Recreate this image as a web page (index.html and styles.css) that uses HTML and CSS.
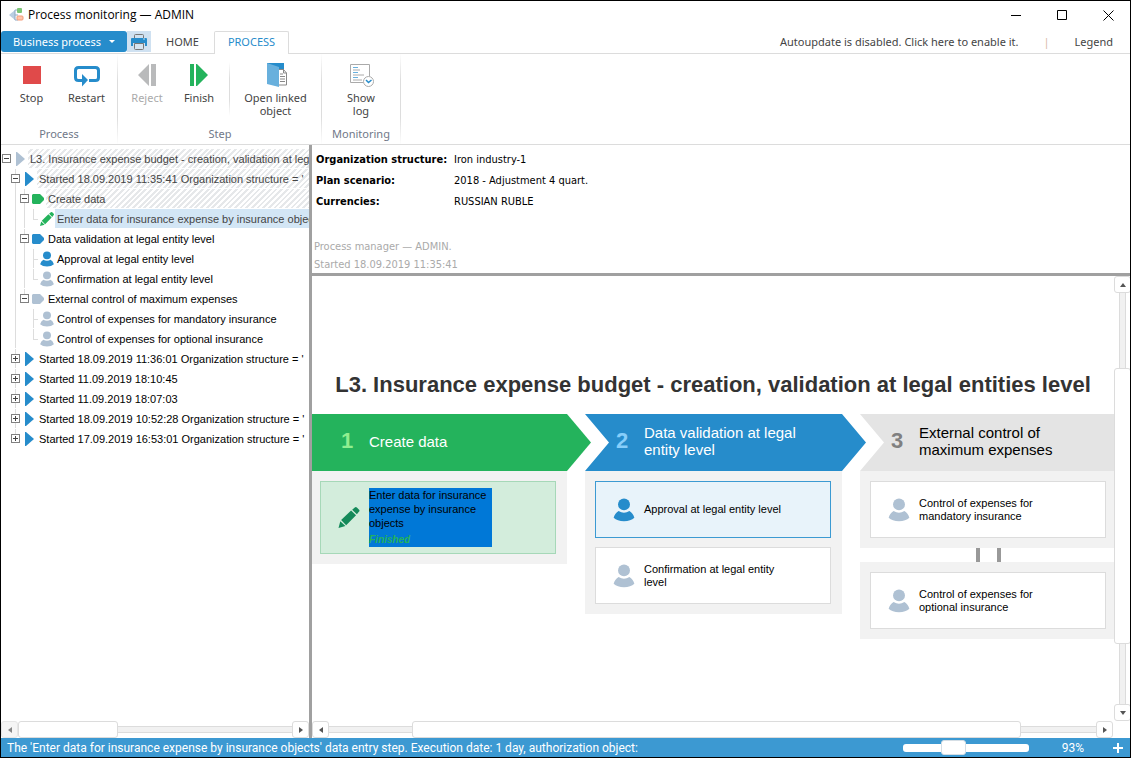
FILE: index.html
```html
<!DOCTYPE html>
<html lang="en">
<head>
  <meta charset="UTF-8">
  <meta name="viewport" content="width=device-width, initial-scale=1.0">
  <title>Process monitoring — ADMIN</title>
  <link rel="stylesheet" href="styles.css">
</head>
<body>
  <svg class="sprite" aria-hidden="true">
    <symbol id="play" viewBox="0 0 14 16"><path d="M3 1h1l8 7-8 7H3z" fill="currentColor"/></symbol>
    <symbol id="tag" viewBox="0 0 14 16"><path d="M2 3h7l4 4v2l-4 4H2l-1-1V4z" fill="currentColor"/></symbol>
    <symbol id="person" viewBox="0 0 14 16"><ellipse cx="7" cy="4.300" rx="4" ry="3.900" fill="currentColor"/><path d="M3.400 8.700Q7 10.800 10.600 8.700 13 10 13.900 13.200 11.500 15.500 7 15.500T.1 13.200Q1 10 3.400 8.700z" fill="currentColor"/></symbol>
    <symbol id="pencil" viewBox="0 0 20 20"><path d="M0 20l1.700-6.500 4.900 4.700zM2.500 12.500L12 3.300l4.700 4.600-9.400 9.500zM13 2.500L15.500.5q1-.9 2 0L19.600 2.600q.8.9 0 1.800L17.500 7z" fill="currentColor"/></symbol>
  </svg>

  <div class="window">
    <header class="titlebar">
      <svg class="app-icon" viewBox="0 0 16 16">
        <path d="M0 8l6-5v10z" fill="#b9cee2"/><path d="M6 3h3M6 8h3M6 13h3M6 3v10" stroke="#8ea9c4" fill="none"/>
        <rect x="8" y="1" width="5" height="5" rx="1" fill="#7cc576"/><rect x="8" y="9" width="6" height="4" rx="1" fill="#ffc6ad" stroke="#f59b78"/>
      </svg>
      <h1>Process monitoring — ADMIN</h1>
      <div class="window-buttons">
        <button aria-label="Minimize"><svg viewBox="0 0 11 11"><path d="M0 5.500h10"/></svg></button>
        <button aria-label="Maximize"><svg viewBox="0 0 11 11"><path d="M.5.5h9v9h-9z"/></svg></button>
        <button aria-label="Close"><svg viewBox="0 0 11 11"><path d="M.5.5l10 10M10.500.5l-10 10"/></svg></button>
      </div>
    </header>

    <nav class="tabs">
      <button class="menu-button">Business process <span class="caret"></span></button>
      <button class="print" aria-label="Print">
        <svg viewBox="0 0 16 16"><path d="M3.500 5V1.500q0-1 1-1h7q1 0 1 1V5" fill="none" stroke="#777"/><path d="M1 4h11v2h2V4h1q1 0 1 1v7h-2V9H2v3H0V5q0-1 1-1z" fill="#268ccb"/><path d="M12 4h2v2h-2z" fill="#6fb4de"/><path d="M3.500 9.500h9v5q0 1-1 1h-7q-1 0-1-1z" fill="#d5e4f1" stroke="#777"/></svg>
      </button>
      <a class="tab" href="#home">HOME</a>
      <a class="tab active" href="#process">PROCESS</a>
      <div class="tab-links">
        <a href="#autoupdate">Autoupdate is disabled. Click here to enable it.</a>
        <span class="bar">|</span>
        <a href="#legend">Legend</a>
      </div>
    </nav>

    <section class="ribbon">
      <div class="group">
        <div class="tools">
          <button><svg viewBox="0 0 26 26"><path d="M4 4h18v18H4z" fill="#e04a4a"/></svg>Stop</button>
          <button><svg viewBox="0 0 26 26"><path d="M8 18.500H4.500q-3 0-3-3v-7q0-3 3-3h17q3 0 3 3v7q0 3-3 3H15" fill="none" stroke="#268ccb" stroke-width="3"/><path d="M8 12l6 6-6 6.500z" fill="#268ccb"/></svg>Restart</button>
        </div>
        <div class="caption">Process</div>
      </div>
      <div class="group step">
        <div class="tools">
          <button disabled><svg viewBox="0 0 26 26"><path d="M4 13L15 2v22zM17 2h5v22h-5z" fill="#b9babb"/></svg>Reject</button>
          <button><svg viewBox="0 0 26 26"><path d="M4 2h4v22H4zM10 2h1l11 11-11 11h-1z" fill="#24b35c"/></svg>Finish</button>
          <span class="divider"></span>
          <button class="wide"><svg viewBox="0 0 26 26"><path d="M4 1h17v20H4z" fill="#268ccb"/><path d="M15.500 7.500h5l3 3.500v12h-8z" fill="#fff" stroke="#888"/><path d="M20.500 7v4h3M17 12h3M17 14.500h5M17 17h5M17 19.500h5" fill="none" stroke="#888"/><path d="M4 1l12 4v20L4 22z" fill="#68b0dd"/></svg>Open linked<br>object</button>
        </div>
        <div class="caption">Step</div>
      </div>
      <div class="group">
        <div class="tools">
          <button class="log"><svg viewBox="0 0 26 26"><path d="M15 20.500H2.500v-18h19V14" fill="none" stroke="#aaa"/><path d="M5 8h7M5 13h11M5 18h9" stroke="#aaa"/><path d="M5 5.500h5M5 10.500h5M5 15.500h5" stroke="#68b0dd"/><circle cx="20.500" cy="19.500" r="5" fill="#fff" stroke="#aaa"/><path d="M18 18l2.500 2.500L23.500 18" fill="none" stroke="#268ccb" stroke-width="1.500"/></svg>Show<br>log</button>
        </div>
        <div class="caption">Monitoring</div>
      </div>
    </section>

    <main class="workspace">
      <aside class="sidebar">
        <ul class="tree">
          <li>
            <div class="row hatched"><button class="toggle" aria-label="Collapse"></button><svg class="muted"><use href="#play"/></svg><span>L3. Insurance expense budget - creation, validation at leg</span></div>
            <ul>
              <li>
                <div class="row hatched"><button class="toggle" aria-label="Collapse"></button><svg class="blue"><use href="#play"/></svg><span>Started 18.09.2019 11:35:41 Organization structure = '</span></div>
                <ul>
                  <li>
                    <div class="row hatched"><button class="toggle" aria-label="Collapse"></button><svg class="green"><use href="#tag"/></svg><span>Create data</span></div>
                    <ul>
                      <li><div class="row selected"><svg class="green"><use href="#pencil"/></svg><span>Enter data for insurance expense by insurance objec</span></div></li>
                    </ul>
                  </li>
                  <li>
                    <div class="row"><button class="toggle" aria-label="Collapse"></button><svg class="blue"><use href="#tag"/></svg><span>Data validation at legal entity level</span></div>
                    <ul>
                      <li><div class="row"><svg class="blue"><use href="#person"/></svg><span>Approval at legal entity level</span></div></li>
                      <li><div class="row"><svg class="muted"><use href="#person"/></svg><span>Confirmation at legal entity level</span></div></li>
                    </ul>
                  </li>
                  <li>
                    <div class="row"><button class="toggle" aria-label="Collapse"></button><svg class="muted"><use href="#tag"/></svg><span>External control of maximum expenses</span></div>
                    <ul>
                      <li><div class="row"><svg class="muted"><use href="#person"/></svg><span>Control of expenses for mandatory insurance</span></div></li>
                      <li><div class="row"><svg class="muted"><use href="#person"/></svg><span>Control of expenses for optional insurance</span></div></li>
                    </ul>
                  </li>
                </ul>
              </li>
              <li><div class="row"><button class="toggle closed" aria-label="Expand"></button><svg class="blue"><use href="#play"/></svg><span>Started 18.09.2019 11:36:01 Organization structure = '</span></div></li>
              <li><div class="row"><button class="toggle closed" aria-label="Expand"></button><svg class="blue"><use href="#play"/></svg><span>Started 11.09.2019 18:10:45</span></div></li>
              <li><div class="row"><button class="toggle closed" aria-label="Expand"></button><svg class="blue"><use href="#play"/></svg><span>Started 11.09.2019 18:07:03</span></div></li>
              <li><div class="row"><button class="toggle closed" aria-label="Expand"></button><svg class="blue"><use href="#play"/></svg><span>Started 18.09.2019 10:52:28 Organization structure = '</span></div></li>
              <li><div class="row"><button class="toggle closed" aria-label="Expand"></button><svg class="blue"><use href="#play"/></svg><span>Started 17.09.2019 16:53:01 Organization structure = '</span></div></li>
            </ul>
          </li>
        </ul>
        <div class="scroll">
          <button class="off" aria-label="Scroll left"><i class="left"></i></button>
          <div class="thumb side-thumb"></div>
          <div class="track"></div>
          <button aria-label="Scroll right"><i class="right"></i></button>
        </div>
      </aside>

      <section class="content">
        <div class="info">
          <dl>
            <dt>Organization structure:</dt><dd>Iron industry-1</dd>
            <dt>Plan scenario:</dt><dd>2018 - Adjustment 4 quart.</dd>
            <dt>Currencies:</dt><dd>RUSSIAN RUBLE</dd>
          </dl>
          <p>Process manager — ADMIN.<br>Started 18.09.2019 11:35:41</p>
        </div>

        <div class="diagram-area">
          <div class="diagram">
            <h2>L3. Insurance expense budget - creation, validation at legal entities level</h2>
            <div class="stages">
              <div class="stage">
                <div class="arrow done first"><b>1</b><span>Create data</span></div>
                <div class="cards">
                  <div class="card finished">
                    <svg><use href="#pencil"/></svg>
                    <div class="marked">Enter data for insurance expense by insurance objects <em>Finished</em></div>
                  </div>
                </div>
              </div>
              <div class="stage">
                <div class="arrow current"><b>2</b><span>Data validation at legal entity level</span></div>
                <div class="cards">
                  <div class="card active"><svg class="blue"><use href="#person"/></svg><span>Approval at legal entity level</span></div>
                  <div class="card"><svg class="muted"><use href="#person"/></svg><span>Confirmation at legal entity level</span></div>
                </div>
              </div>
              <div class="stage">
                <div class="arrow"><b>3</b><span>External control of maximum expenses</span></div>
                <div class="cards">
                  <div class="card"><svg class="muted"><use href="#person"/></svg><span>Control of expenses for mandatory insurance</span></div>
                </div>
                <div class="link"></div>
                <div class="cards">
                  <div class="card"><svg class="muted"><use href="#person"/></svg><span>Control of expenses for optional insurance</span></div>
                </div>
              </div>
            </div>
          </div>
          <div class="scroll vertical">
            <button aria-label="Scroll up"><i class="up"></i></button>
            <div class="track short"></div>
            <div class="thumb tall-thumb"></div>
            <div class="track"></div>
            <button aria-label="Scroll down"><i class="down"></i></button>
          </div>
        </div>
        <div class="scroll main-scroll">
          <button aria-label="Scroll left"><i class="left"></i></button>
          <div class="track before"></div>
          <div class="thumb main-thumb"></div>
          <div class="track after"></div>
          <button aria-label="Scroll right"><i class="right"></i></button>
        </div>
      </section>
    </main>

    <footer class="status">
      <span class="message">The 'Enter data for insurance expense by insurance objects' data entry step. Execution date: 1 day, authorization object:</span>
      <input type="range" min="0" max="100" value="38" aria-label="Zoom">
      <output>93%</output>
      <button aria-label="Zoom in"><svg viewBox="0 0 10 10"><path d="M5 0v10M0 5h10" stroke="#fff" stroke-width="2"/></svg></button>
    </footer>
  </div>
</body>
</html>
```
FILE: styles.css
```css
* { box-sizing: border-box; }
body { margin: 0; font: 11px/13px "Noto Sans", sans-serif; color: #444; background: #fff; }
button { font: inherit; color: inherit; background: none; border: 0; padding: 0; }
a { color: inherit; text-decoration: none; }
ul { list-style: none; margin: 0; padding: 0; }
.sprite { display: none; }
.blue { color: #268ccb; }
.green { color: #24b35c; }
.muted { color: #afc1d3; }

.window { height: 100vh; border: 1px solid #000; display: flex; flex-direction: column; overflow: hidden; }

/* title bar */
.titlebar { height: 30px; flex: none; display: flex; align-items: center; padding: 0 16px 2px 8px; }
.app-icon { width: 16px; height: 16px; }
.titlebar h1 { margin: 0 0 0 3px; font: 12px/16px "Open Sans", sans-serif; color: #000; flex: 1; }
.window-buttons { display: flex; gap: 35px; }
.window-buttons svg { display: block; width: 11px; height: 11px; fill: none; stroke: #000; }

/* tabs */
.tabs { height: 23px; flex: none; display: flex; border-bottom: 1px solid #dcdcdc; }
.menu-button { width: 126px; height: 21px; background: #268ccb; color: #fff; border-radius: 3px; display: flex; align-items: center; justify-content: center; gap: 8px; }
.caret { border: 3px solid transparent; border-top-color: #fff; border-bottom: 0; }
.print { width: 24px; height: 21px; background: #cfe1f1; display: flex; align-items: center; justify-content: center; }
.print svg { width: 16px; height: 16px; }
.tab { width: 63px; line-height: 21px; text-align: center; font-size: 11px; }
.tab.active { width: 75px; height: 23px; border: 1px solid #dcdcdc; border-bottom: 0; border-radius: 2px 2px 0 0; background: #fff; color: #268ccb; line-height: 20px; }
.tab-links { margin-left: auto; padding-right: 17px; display: flex; line-height: 22px; }
.bar { width: 56px; text-align: center; color: #d9b8a8; }

/* ribbon */
.ribbon { height: 91px; flex: none; display: flex; border-bottom: 1px solid #dcdcdc; }
.group { display: flex; flex-direction: column; border-right: 1px solid; border-image: linear-gradient(#fff, #ddd 30%, #ddd 70%, #fff) 1; padding: 8px 3px 0; }
.tools { display: flex; height: 65px; }
.tools button { width: 55px; display: flex; flex-direction: column; align-items: center; justify-content: flex-start; }
.tools svg { width: 26px; height: 26px; margin-bottom: 3px; flex: none; }
.tools button:disabled { color: #aaa; }
.group.step { padding: 8px 2px 0 3px; }
.step .tools button { width: 52px; }
.step .tools .wide { width: 87px; }
.tools .log { width: 72px; }
.divider { width: 1px; height: 54px; margin: 0 2px 0 4px; background: linear-gradient(#fff, #ddd 30%, #ddd 70%, #fff); }
.caption { text-align: center; color: #707888; }

/* workspace */
.workspace { flex: 1; min-height: 0; display: flex; }
.sidebar { width: 308px; flex: none; display: flex; flex-direction: column; }
.tree { flex: 1; padding: 4px 0 0 1px; overflow: hidden; font: 11px/20px "Liberation Sans", sans-serif; color: #000; }
.tree ul { padding-left: 9px; }
.tree ul li { background: linear-gradient(#ddd, #ddd) 4px 0 / 1px 100% no-repeat; }
.tree ul li:last-child { background-size: 1px 10px; }
.tree ul ul ul li { background: linear-gradient(#ddd, #ddd) 4px 0 / 1px 100% no-repeat, linear-gradient(#ddd, #ddd) 4px 10px / 5px 1px no-repeat; }
.tree ul ul ul li:last-child { background-size: 1px 10px, 5px 1px; }
.row { display: flex; align-items: center; height: 19px; margin-bottom: 1px; padding-left: 11px; }
.row svg { width: 14px; height: 16px; margin-right: 1px; flex: none; }
.row span { flex: 1; height: 19px; padding-left: 2px; white-space: nowrap; }
.toggle { width: 9px; height: 9px; margin: 0 2px 0 -11px; flex: none; border: 1px solid #808080; background: linear-gradient(#444, #444) center / 5px 1px no-repeat #fff; }
.toggle.closed { background: linear-gradient(#444, #444) center / 5px 1px no-repeat, linear-gradient(#444, #444) center / 1px 5px no-repeat #fff; }
.hatched span { color: #444; background: repeating-linear-gradient(135deg, #fff 0 2px, #e6e8ea 2px 4px); }
.selected span { color: #444; background: #d3e6f5; }

/* scroll bars */
.scroll { height: 17px; flex: none; display: flex; align-items: center; }
.scroll button, .thumb { border: 1px solid #dcdcdc; border-radius: 3px; background: #fff; flex: none; }
.scroll button { width: 17px; height: 17px; display: flex; align-items: center; justify-content: center; }
.scroll .off { background: #f1f1f1; opacity: .7; }
.thumb { height: 17px; }
.track { flex: 1; height: 7px; background: #f1f1f1; border: 1px solid #dcdcdc; border-width: 1px 0; }
.scroll i { border: 3px solid transparent; }
.scroll .left { border-right: 4px solid #555; border-left: 0; }
.scroll .right { border-left: 4px solid #555; border-right: 0; }
.scroll .up { border-bottom: 4px solid #555; border-top: 0; }
.scroll .down { border-top: 4px solid #555; border-bottom: 0; }
.side-thumb { width: 100px; }
.main-scroll { margin-right: 17px; }
.main-thumb { width: 76%; }
.before { flex-grow: 10; }
.after { flex-grow: 9; }
.vertical { width: 17px; height: auto; flex-direction: column; margin-right: -1px; }
.vertical .track { width: 7px; border-width: 0 1px; }
.vertical .short { flex: none; height: 75px; }
.tall-thumb { width: 17px; height: 62%; }

/* header of the selected process */
.content { flex: 1; min-width: 0; display: flex; flex-direction: column; border-left: 3px solid #a0a0a0; }
.info { height: 131px; flex: none; border-bottom: 3px solid #a0a0a0; padding: 4px 4px 0 2px; font-family: "DejaVu Sans Condensed", sans-serif; color: #000; }
.info dl { margin: 0 0 26px 2px; display: grid; grid-template-columns: 138px 1fr; line-height: 21px; }
.info dt { font-weight: bold; }
.info dd { margin: 0; }
.info p { margin: 0; line-height: 18px; color: #aaa; }

/* diagram */
.diagram-area { flex: 1; min-height: 0; display: flex; }
.diagram { flex: 1; min-width: 0; overflow: hidden; padding-top: 97px; font-family: "Liberation Sans", sans-serif; color: #000; }
.diagram h2 { margin: 0 0 17px; font-size: 22px; line-height: 24px; text-align: center; white-space: nowrap; color: #333; }
.stages { display: grid; grid-template-columns: repeat(3, 257px); gap: 18px; align-items: start; margin-left: -2px; }
.arrow { height: 57px; margin-right: -24px; padding: 0 60px 3px 31px; display: flex; align-items: center; background: #e4e4e4; font-size: 15px; line-height: 17px; clip-path: polygon(0 0, calc(100% - 24px) 0, 100% 50%, calc(100% - 24px) 100%, 0 100%, 24px 50%); }
.arrow.first { clip-path: polygon(0 0, calc(100% - 24px) 0, 100% 50%, calc(100% - 24px) 100%, 0 100%); }
.arrow b { width: 28px; font-size: 22px; line-height: 24px; color: #808080; flex: none; }
.arrow.done { background: #24b35c; color: #fff; }
.arrow.done b { color: #90ee90; }
.arrow.current { background: #268ccb; color: #fff; }
.arrow.current b { color: #87cefa; }
.cards { background: #f2f2f2; padding: 10px 11px 10px 10px; display: flex; flex-direction: column; gap: 9px; }
.card { min-height: 57px; border: 1px solid #dcdcdc; background: #fff; display: flex; align-items: center; padding: 5px 40px 5px 17px; }
.card svg { width: 22px; height: 24px; margin-right: 9px; flex: none; }
.card.active { background: #e8f3fa; border-color: #3c9ad2; }
.card.finished { min-height: 73px; background: #d3eddc; border-color: #a6d8b8; }
.finished svg { color: #158a5a; height: 21px; }
.marked { background: #0078d7; line-height: 14px; width: 123px; flex: none; }
.marked em { display: block; margin-top: 3px; font-size: 10px; font-weight: bold; color: #24b35c; }
.link { width: 25px; height: 14px; margin: 0 auto; border: 4px solid #999; border-width: 0 4px; }

/* status bar */
.status { height: 19px; flex: none; display: flex; align-items: center; background: #3c99d2; color: #fff; font: 12px/16px Roboto, sans-serif; padding: 0 7px 0 6px; }
.message { flex: 1; white-space: nowrap; }
.status input { appearance: none; width: 126px; height: 8px; margin: 0; border-radius: 3px; background: #fff; }
.status input::-webkit-slider-thumb { appearance: none; width: 25px; height: 15px; border: 1px solid #d5dee5; border-radius: 3px; background: #fff; }
.status output { width: 84px; padding-left: 4px; text-align: center; }
.status button svg { display: block; width: 10px; height: 10px; }
```
